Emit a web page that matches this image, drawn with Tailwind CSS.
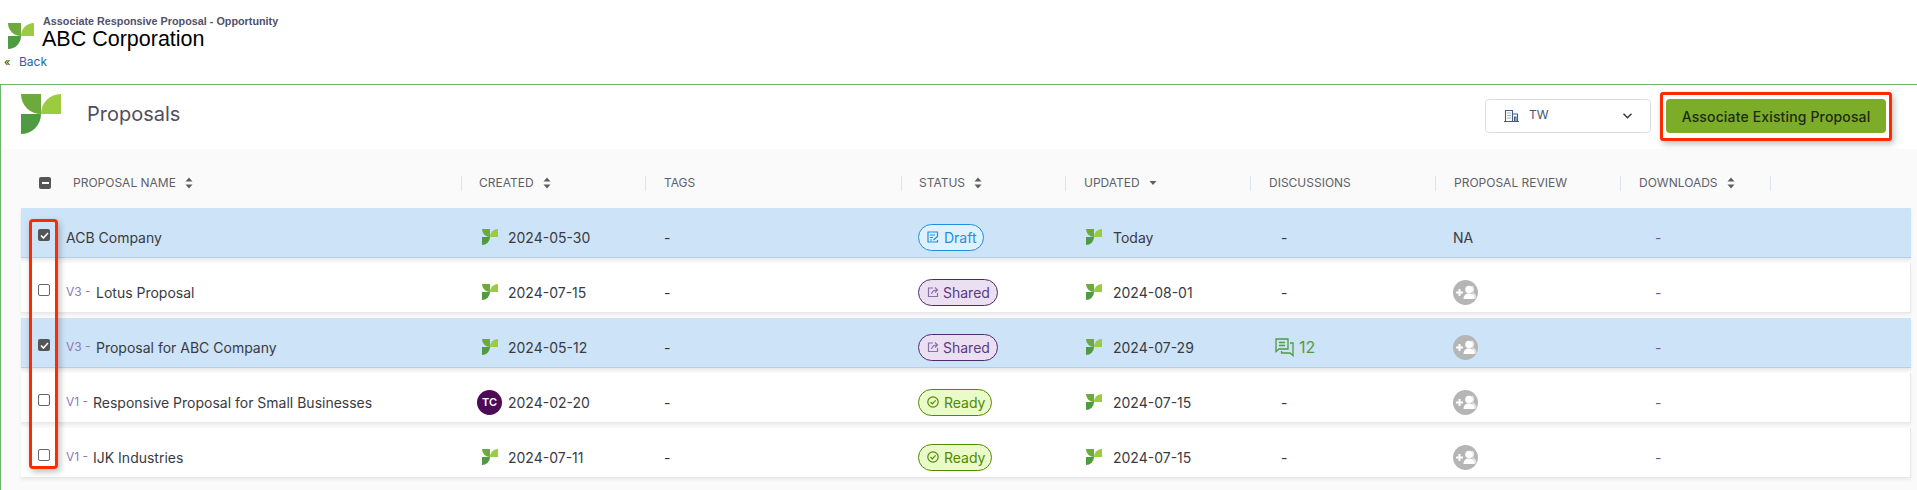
<!doctype html>
<html>
<head>
<meta charset="utf-8">
<title>Proposals</title>
<script src="https://cdn.jsdelivr.net/npm/@tailwindcss/browser@4"></script>
</head>
<body class="bg-white font-['Inter',sans-serif] text-[#333]">
<svg class="hidden">
	<symbol id="leaf" viewBox="0 0 40 40">
		<path fill="#6cab3b" d="M0 0H20V20A20 20 0 0 1 0 0Z" />
		<path fill="#9bcb3f" d="M40 0V20H20A20 20 0 0 1 40 0Z" />
		<path fill="#4f9b42" d="M0 20H20A20 20 0 0 1 0 40Z" />
	</symbol>
	<symbol id="sort" viewBox="0 0 8 12">
		<path fill="#5f5f5f" d="M4 0.5 7.5 4.5H0.5ZM4 11.5 0.5 7.5H7.5Z" />
	</symbol>
	<symbol id="review" viewBox="0 0 25 25">
		<circle cx="12.5" cy="12.5" r="12.5" fill="#b5b5b5" />
		<path fill="none" stroke="#fff" stroke-width="2" d="M3 12.5H10M6.5 9V16" />
		<path fill="#e4e4e4" d="M18.5 5.5C21.5 5.5 22 10.5 20 12.5C22.5 13.5 23.5 15.5 23.5 18.5H20Z" />
		<circle cx="16" cy="9.5" r="3.8" fill="#fff" />
		<path fill="#fff" d="M10.5 19C10.5 15.5 12.5 13.5 16 13.5S21.5 15.5 21.5 19Z" />
	</symbol>
</svg>

<header class="h-[84px] relative">
	<div class="flex items-start pl-2 pt-[15px]">
		<svg class="w-[26px] h-[26px] mt-2"><use href="#leaf" /></svg>
		<div class="ml-[9px] font-['Liberation_Sans',sans-serif]">
			<div class="text-[10.8px] leading-[12px] font-bold text-[#50506c] whitespace-nowrap">Associate Responsive Proposal - Opportunity</div>
			<div class="text-[21.5px] leading-[25px] text-black -ml-px whitespace-nowrap">ABC Corporation</div>
		</div>
	</div>
	<div class="flex items-center pl-1 mt-[3px] text-[12px] leading-[14px]">
		<span class="text-[#333] w-[15px] text-[11px]">«</span>
		<a class="text-[#1a6aa8]">Back</a>
	</div>
</header>

<main class="relative border-t border-l border-[#6db56d] h-[406px]">
	<section class="h-[64px] flex items-start pl-5">
		<svg class="w-10 h-10 mt-[9px]"><use href="#leaf" /></svg>
		<h1 class="ml-[26px] mt-[17px] text-[20px] leading-6 text-[#4f4f5f]">Proposals</h1>
		<div class="ml-auto mt-[14px] w-[166px] h-[34px] border border-[#dcdcdc] rounded flex items-center pl-[18px] pr-[18px]">
			<svg class="w-[15px] h-[12px]" viewBox="0 0 15 12" fill="none" stroke="#3f5f8a" stroke-width="1.1">
				<path d="M1.5 11.5V0.5H8.5V11.5M8.5 4H13.5V11.5M0 11.5H15M3.5 3H4.5M5.5 3H6.5M3.5 5.5H4.5M5.5 5.5H6.5M3.5 8H4.5M5.5 8H6.5M10.5 11.5V7H12V11.5" />
			</svg>
			<span class="ml-[10px] -mt-[2px] text-[12px] text-[#3f5378]">TW</span>
			<svg class="ml-auto w-[9px] h-[6px]" viewBox="0 0 9 6" fill="none" stroke="#333" stroke-width="1.3"><path d="M0.5 0.8 4.5 4.8 8.5 0.8" /></svg>
		</div>
		<button class="ml-[15px] mr-[31px] mt-[14px] w-[220px] h-[34px] rounded bg-[#7bad28] text-[14px] font-medium tracking-[0.15px] text-[#1f2a10]">Associate Existing Proposal</button>
	</section>

	<section class="bg-[#fafafa] h-[341px] pl-5 pr-[6px]">
		<div class="h-[59px] pt-[9px] grid grid-cols-[39px_401px_184px_256px_164px_185px_185px_185px_151px] items-center text-[12px] text-[#5f5f68]">
			<div class="pl-[18px]">
				<span class="w-3 h-3 rounded-[2px] bg-[#555] flex items-center justify-center"><span class="w-[7px] h-[2px] bg-white"></span></span>
			</div>
			<div class="pl-[13px] flex items-center gap-[9px]">PROPOSAL NAME <svg class="w-2 h-3"><use href="#sort" /></svg></div>
			<div class="h-[15px] border-l border-[#dde4ee] pl-[17px] flex items-center gap-[9px]">CREATED <svg class="w-2 h-3"><use href="#sort" /></svg></div>
			<div class="h-[15px] border-l border-[#dde4ee] pl-[18px] flex items-center">TAGS</div>
			<div class="h-[15px] border-l border-[#dde4ee] pl-[17px] flex items-center gap-[9px]">STATUS <svg class="w-2 h-3"><use href="#sort" /></svg></div>
			<div class="h-[15px] border-l border-[#dde4ee] pl-[18px] flex items-center gap-[9px]">UPDATED <svg class="w-2 h-[6px]" viewBox="0 0 8 6"><path fill="#5f5f5f" d="M0.5 1H7.5L4 5Z" /></svg></div>
			<div class="h-[15px] border-l border-[#dde4ee] pl-[18px] flex items-center">DISCUSSIONS</div>
			<div class="h-[15px] border-l border-[#dde4ee] pl-[18px] flex items-center">PROPOSAL REVIEW</div>
			<div class="h-[15px] border-l border-r border-[#dde4ee] pl-[18px] flex items-center gap-[9px]">DOWNLOADS <svg class="w-2 h-3"><use href="#sort" /></svg></div>
		</div>

		<div class="flex flex-col gap-[5px] text-[14px]">
			<div class="h-[50px] pt-[9px] bg-[#cde3f7] border-b border-[#b4cfe6] shadow-[0_2px_3px_rgba(0,0,0,0.08)] grid grid-cols-[39px_401px_184px_256px_164px_185px_185px_185px_151px] items-center">
				<div class="pl-[17px] -mt-[4px]"><span class="w-3 h-3 rounded-[2px] bg-[#555] flex items-center justify-center"><svg class="w-[9px] h-[7px]" viewBox="0 0 9 7" fill="none" stroke="#fff" stroke-width="1.6"><path d="M1 3.5 3.4 6 8 1" /></svg></span></div>
				<div class="pl-[6px] text-[#3a3a42]">ACB Company</div>
				<div class="pl-[21px] flex items-center gap-[10px] text-[#3a3a42]"><svg class="w-4 h-4"><use href="#leaf" /></svg>2024-05-30</div>
				<div class="pl-[19px] text-[#333]">-</div>
				<div class="pl-[17px]"><span class="inline-flex items-center h-[27px] pl-2 pr-[6px] gap-[5px] rounded-full border border-[#1d8ee0] bg-[#dff1ff] text-[#1d8ee0]"><svg class="w-3 h-3" viewBox="0 0 12 12" fill="none" stroke="#1d8ee0" stroke-width="1.2"><path d="M10.5 5V1H1V11H10.5V9M3 4H8M3 6.5H6M3 9H5M6.5 9 11 5" /></svg>Draft</span></div>
				<div class="pl-[21px] flex items-center gap-[11px] text-[#3a3a42]"><svg class="w-4 h-4"><use href="#leaf" /></svg>Today</div>
				<div class="pl-[31px] text-[#333]">-</div>
				<div class="pl-[18px] text-[#3a3a42]">NA</div>
				<div class="pl-[35px] text-[#7a4fb5]">-</div>
			</div>

			<div class="h-[50px] pt-[9px] bg-white border-b border-r border-[#e8e8e8] shadow-[0_2px_3px_rgba(0,0,0,0.06)] grid grid-cols-[39px_401px_184px_256px_164px_185px_185px_185px_151px] items-center">
				<div class="pl-[17px] -mt-[4px]"><span class="block w-3 h-3 rounded-[2px] border-[1.5px] border-[#666] bg-white"></span></div>
				<div class="pl-[6px] flex items-center text-[#3a3a42]"><span class="text-[12px] text-[#8e7ab5] w-[30px]">V3 -</span>Lotus Proposal</div>
				<div class="pl-[21px] flex items-center gap-[10px] text-[#3a3a42]"><svg class="w-4 h-4"><use href="#leaf" /></svg>2024-07-15</div>
				<div class="pl-[19px] text-[#333]">-</div>
				<div class="pl-[17px]"><span class="inline-flex items-center h-[27px] pl-2 pr-[7px] gap-1 rounded-full border border-[#4e2a72] bg-[#eae0f2] text-[#5a3a80]"><svg class="w-3 h-3" viewBox="0 0 12 12" fill="none" stroke="#8a6fa8" stroke-width="1.2"><path d="M6 2H1.5V10.5H10.5V7M4.5 8C5 5.5 7 4 10 4M8 1.5 10.5 4 8 6.5" /></svg>Shared</span></div>
				<div class="pl-[21px] flex items-center gap-[11px] text-[#3a3a42]"><svg class="w-4 h-4"><use href="#leaf" /></svg>2024-08-01</div>
				<div class="pl-[31px] text-[#333]">-</div>
				<div class="pl-[18px]"><svg class="block w-[25px] h-[25px]"><use href="#review" /></svg></div>
				<div class="pl-[35px] text-[#7a4fb5]">-</div>
			</div>

			<div class="h-[50px] pt-[9px] bg-[#cde3f7] border-b border-[#b4cfe6] shadow-[0_2px_3px_rgba(0,0,0,0.08)] grid grid-cols-[39px_401px_184px_256px_164px_185px_185px_185px_151px] items-center">
				<div class="pl-[17px] -mt-[4px]"><span class="w-3 h-3 rounded-[2px] bg-[#555] flex items-center justify-center"><svg class="w-[9px] h-[7px]" viewBox="0 0 9 7" fill="none" stroke="#fff" stroke-width="1.6"><path d="M1 3.5 3.4 6 8 1" /></svg></span></div>
				<div class="pl-[6px] flex items-center text-[#3a3a42]"><span class="text-[12px] text-[#8e7ab5] w-[30px]">V3 -</span>Proposal for ABC Company</div>
				<div class="pl-[21px] flex items-center gap-[10px] text-[#3a3a42]"><svg class="w-4 h-4"><use href="#leaf" /></svg>2024-05-12</div>
				<div class="pl-[19px] text-[#333]">-</div>
				<div class="pl-[17px]"><span class="inline-flex items-center h-[27px] pl-2 pr-[7px] gap-1 rounded-full border border-[#4e2a72] bg-[#eae0f2] text-[#5a3a80]"><svg class="w-3 h-3" viewBox="0 0 12 12" fill="none" stroke="#8a6fa8" stroke-width="1.2"><path d="M6 2H1.5V10.5H10.5V7M4.5 8C5 5.5 7 4 10 4M8 1.5 10.5 4 8 6.5" /></svg>Shared</span></div>
				<div class="pl-[21px] flex items-center gap-[11px] text-[#3a3a42]"><svg class="w-4 h-4"><use href="#leaf" /></svg>2024-07-29</div>
				<div class="pl-[25px] flex items-center gap-[5px] text-[16px] text-[#4f9b42]"><svg class="w-[19px] h-[19px]" viewBox="0 0 19 19" fill="none" stroke="#4f9b42" stroke-width="1.3"><path d="M1 1H13V11H4L1 13.5ZM4 4.5H10M4 7.5H10M15 5H18V17.5L15 15H6.5V13" /></svg>12</div>
				<div class="pl-[18px]"><svg class="block w-[25px] h-[25px]"><use href="#review" /></svg></div>
				<div class="pl-[35px] text-[#7a4fb5]">-</div>
			</div>

			<div class="h-[50px] pt-[9px] bg-white border-b border-r border-[#e8e8e8] shadow-[0_2px_3px_rgba(0,0,0,0.06)] grid grid-cols-[39px_401px_184px_256px_164px_185px_185px_185px_151px] items-center">
				<div class="pl-[17px] -mt-[4px]"><span class="block w-3 h-3 rounded-[2px] border-[1.5px] border-[#666] bg-white"></span></div>
				<div class="pl-[6px] flex items-center text-[#3a3a42]"><span class="text-[12px] text-[#8e7ab5] w-[27px]">V1 -</span>Responsive Proposal for Small Businesses</div>
				<div class="pl-[16px] flex items-center gap-[6px] text-[#3a3a42]"><span class="w-[25px] h-[25px] rounded-full bg-[#4b0b55] text-white text-[11px] font-semibold flex items-center justify-center">TC</span>2024-02-20</div>
				<div class="pl-[19px] text-[#333]">-</div>
				<div class="pl-[17px]"><span class="inline-flex items-center h-[27px] pl-2 pr-[6px] gap-[5px] rounded-full border border-[#4f8a00] bg-[#eafac8] text-[#4f8a00]"><svg class="w-3 h-3" viewBox="0 0 12 12" fill="none" stroke="#4f8a00" stroke-width="1.2"><circle cx="6" cy="6" r="5.2" /><path d="M3.5 6 5.3 7.8 8.6 4.4" /></svg>Ready</span></div>
				<div class="pl-[21px] flex items-center gap-[11px] text-[#3a3a42]"><svg class="w-4 h-4"><use href="#leaf" /></svg>2024-07-15</div>
				<div class="pl-[31px] text-[#333]">-</div>
				<div class="pl-[18px]"><svg class="block w-[25px] h-[25px]"><use href="#review" /></svg></div>
				<div class="pl-[35px] text-[#7a4fb5]">-</div>
			</div>

			<div class="h-[50px] pt-[9px] bg-white border-b border-r border-[#e8e8e8] shadow-[0_2px_3px_rgba(0,0,0,0.06)] grid grid-cols-[39px_401px_184px_256px_164px_185px_185px_185px_151px] items-center">
				<div class="pl-[17px] -mt-[4px]"><span class="block w-3 h-3 rounded-[2px] border-[1.5px] border-[#666] bg-white"></span></div>
				<div class="pl-[6px] flex items-center text-[#3a3a42]"><span class="text-[12px] text-[#8e7ab5] w-[27px]">V1 -</span>IJK Industries</div>
				<div class="pl-[21px] flex items-center gap-[10px] text-[#3a3a42]"><svg class="w-4 h-4"><use href="#leaf" /></svg>2024-07-11</div>
				<div class="pl-[19px] text-[#333]">-</div>
				<div class="pl-[17px]"><span class="inline-flex items-center h-[27px] pl-2 pr-[6px] gap-[5px] rounded-full border border-[#4f8a00] bg-[#eafac8] text-[#4f8a00]"><svg class="w-3 h-3" viewBox="0 0 12 12" fill="none" stroke="#4f8a00" stroke-width="1.2"><circle cx="6" cy="6" r="5.2" /><path d="M3.5 6 5.3 7.8 8.6 4.4" /></svg>Ready</span></div>
				<div class="pl-[21px] flex items-center gap-[11px] text-[#3a3a42]"><svg class="w-4 h-4"><use href="#leaf" /></svg>2024-07-15</div>
				<div class="pl-[31px] text-[#333]">-</div>
				<div class="pl-[18px]"><svg class="block w-[25px] h-[25px]"><use href="#review" /></svg></div>
				<div class="pl-[35px] text-[#7a4fb5]">-</div>
			</div>
		</div>
	</section>

	<!-- red annotation boxes drawn on top of the screenshot -->
	<div class="absolute left-[1659px] top-[7px] w-[232px] h-[49px] border-[3px] border-[#ff2a00] rounded-[3px] shadow-[2px_3px_6px_rgba(0,0,0,0.25)]"></div>
	<div class="absolute left-[28px] top-[134px] w-[29px] h-[250px] border-[3px] border-[#ff2a00] rounded-[4px] shadow-[2px_3px_6px_rgba(0,0,0,0.25)]"></div>
</main>
</body>
</html>
